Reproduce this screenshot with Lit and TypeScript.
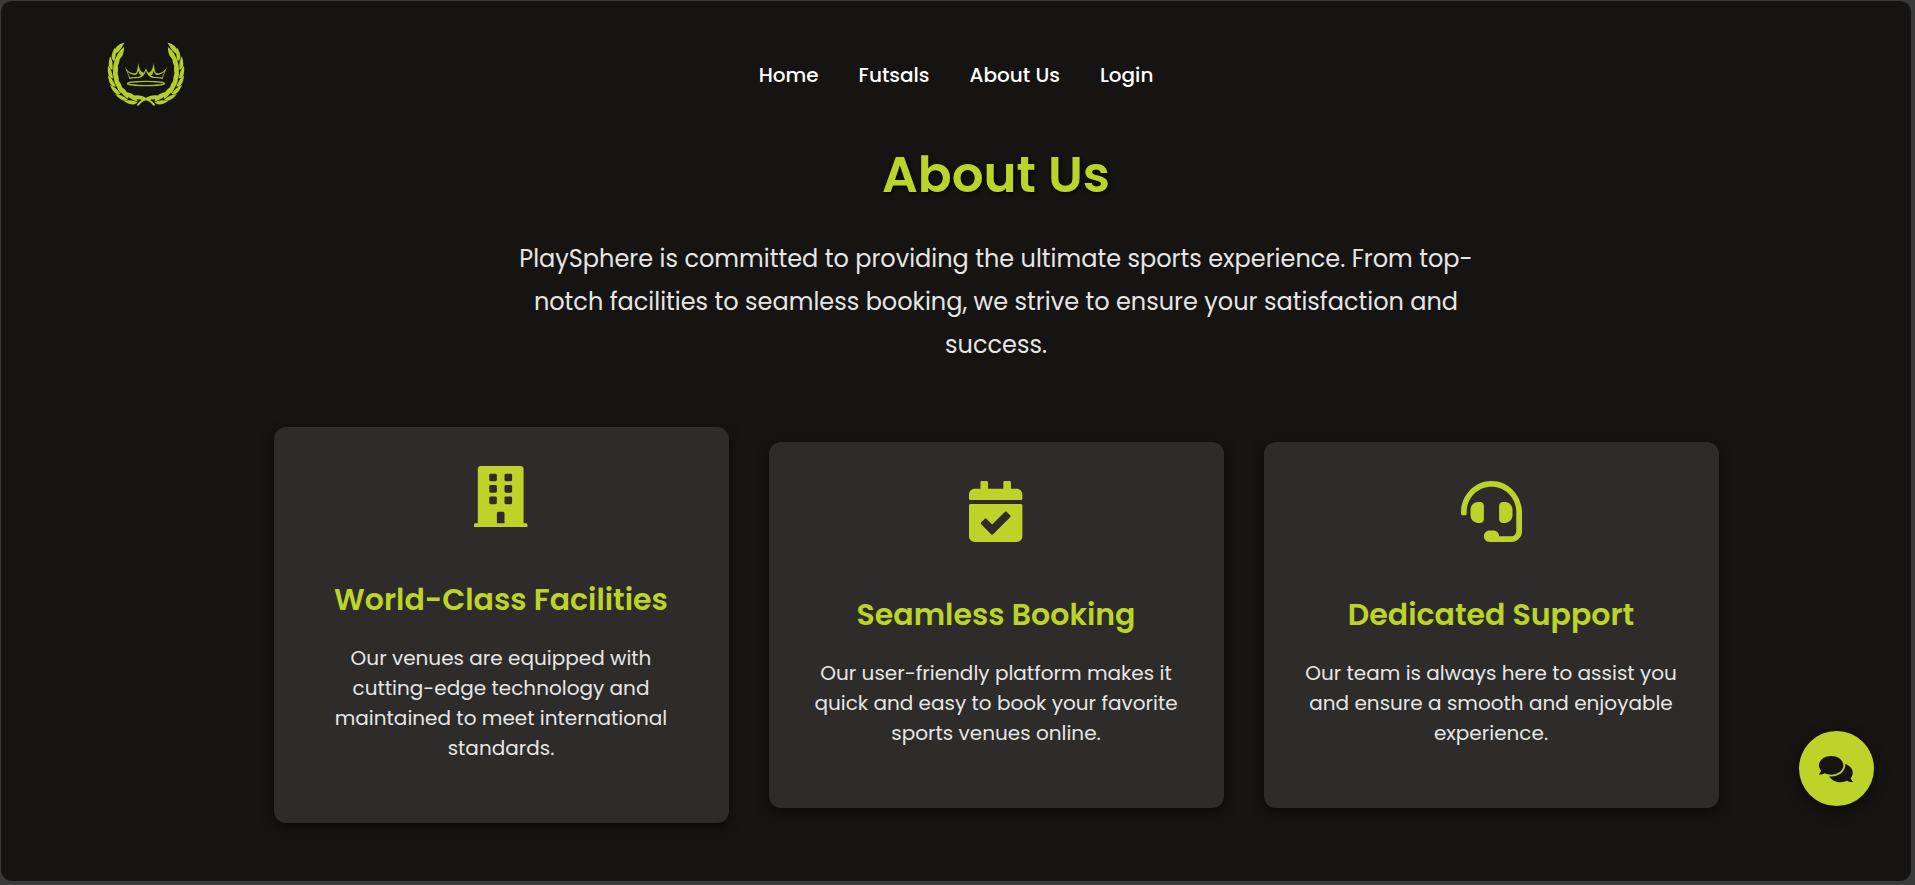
import { LitElement, html, css, svg } from "lit";
import { customElement, property } from "lit/decorators.js";

interface Feature {
  icon: keyof typeof ICONS;
  title: string;
  body: string;
}

const ICONS = {
  building: {
    box: "0 0 448 512",
    d: "M436 480h-20V24c0-13.255-10.745-24-24-24H56C42.745 0 32 10.745 32 24v456H12c-6.627 0-12 5.373-12 12v20h448v-20c0-6.627-5.373-12-12-12zM128 76c0-6.627 5.373-12 12-12h40c6.627 0 12 5.373 12 12v40c0 6.627-5.373 12-12 12h-40c-6.627 0-12-5.373-12-12V76zm0 96c0-6.627 5.373-12 12-12h40c6.627 0 12 5.373 12 12v40c0 6.627-5.373 12-12 12h-40c-6.627 0-12-5.373-12-12v-40zm52 148h-40c-6.627 0-12-5.373-12-12v-40c0-6.627 5.373-12 12-12h40c6.627 0 12 5.373 12 12v40c0 6.627-5.373 12-12 12zm76 160h-64v-84c0-6.627 5.373-12 12-12h40c6.627 0 12 5.373 12 12v84zm64-172c0 6.627-5.373 12-12 12h-40c-6.627 0-12-5.373-12-12v-40c0-6.627 5.373-12 12-12h40c6.627 0 12 5.373 12 12v40zm0-96c0 6.627-5.373 12-12 12h-40c-6.627 0-12-5.373-12-12v-40c0-6.627 5.373-12 12-12h40c6.627 0 12 5.373 12 12v40zm0-96c0 6.627-5.373 12-12 12h-40c-6.627 0-12-5.373-12-12V76c0-6.627 5.373-12 12-12h40c6.627 0 12 5.373 12 12v40z",
  },
  calendar: {
    box: "0 0 448 512",
    d: "M436 160H12c-6.627 0-12-5.373-12-12v-36c0-26.51 21.49-48 48-48h48V12c0-6.627 5.373-12 12-12h40c6.627 0 12 5.373 12 12v52h128V12c0-6.627 5.373-12 12-12h40c6.627 0 12 5.373 12 12v52h48c26.51 0 48 21.49 48 48v36c0 6.627-5.373 12-12 12zM12 192h424c6.627 0 12 5.373 12 12v260c0 26.51-21.49 48-48 48H48c-26.51 0-48-21.49-48-48V204c0-6.627 5.373-12 12-12zm333.296 95.947l-28.169-28.398c-4.667-4.705-12.265-4.736-16.97-.068L194.12 364.665l-45.98-46.352c-4.667-4.705-12.266-4.736-16.971-.068l-28.397 28.17c-4.705 4.667-4.736 12.265-.068 16.97l82.601 83.269c4.667 4.705 12.265 4.736 16.97.068l142.953-141.805c4.705-4.667 4.736-12.265.068-16.97z",
  },
  headset: {
    box: "0 0 512 512",
    d: "M192 208c0-17.67-14.33-32-32-32h-16c-35.35 0-64 28.65-64 64v48c0 35.35 28.65 64 64 64h16c17.67 0 32-14.33 32-32V208zm176 144c35.35 0 64-28.65 64-64v-48c0-35.35-28.65-64-64-64h-16c-17.67 0-32 14.33-32 32v112c0 17.67 14.33 32 32 32h16zM256 0C113.18 0 4.58 118.83 0 256v16c0 8.84 7.16 16 16 16h16c8.84 0 16-7.16 16-16v-16c0-114.69 93.31-208 208-208s208 93.31 208 208h-.12c.08 2.43.12 165.72.12 165.72 0 23.35-18.93 42.28-42.28 42.28H320c0-26.51-21.49-48-48-48h-32c-26.51 0-48 21.49-48 48s21.49 48 48 48h181.72c49.86 0 90.28-40.42 90.28-90.28V256C507.42 118.83 398.82 0 256 0z",
  },
  comments: {
    box: "0 0 576 512",
    d: "M416 192c0-88.4-93.1-160-208-160S0 103.6 0 192c0 34.3 14.1 65.9 38 92-13.4 30.2-35.5 54.2-35.8 54.5-2.2 2.3-2.8 5.7-1.5 8.7S4.8 352 8 352c36.6 0 66.9-12.3 88.7-25 32.2 15.7 70.3 25 111.3 25 114.9 0 208-71.6 208-160zm122 220c23.9-26 38-57.7 38-92 0-66.9-53.5-124.2-129.3-148.1.9 6.6 1.3 13.3 1.3 20.1 0 105.9-107.7 192-240 192-10.8 0-21.3-.8-31.7-1.9C207.8 439.6 281.8 480 368 480c41 0 79.1-9.2 111.3-25 21.8 12.7 52.1 25 88.7 25 3.2 0 6.1-1.9 7.3-4.8 1.3-2.9.7-6.3-1.5-8.7-.3-.3-22.4-24.2-35.8-54.5z",
  },
};

const NAV = ["Home", "Futsals", "About Us", "Login"];

const FEATURES: Feature[] = [
  {
    icon: "building",
    title: "World-Class Facilities",
    body: "Our venues are equipped with cutting-edge technology and maintained to meet international standards.",
  },
  {
    icon: "calendar",
    title: "Seamless Booking",
    body: "Our user-friendly platform makes it quick and easy to book your favorite sports venues online.",
  },
  {
    icon: "headset",
    title: "Dedicated Support",
    body: "Our team is always here to assist you and ensure a smooth and enjoyable experience.",
  },
];

const icon = (name: keyof typeof ICONS) =>
  html`<svg class="icon" viewBox=${ICONS[name].box} fill="currentColor" aria-hidden="true">
    <path d=${ICONS[name].d}></path>
  </svg>`;

/** Leaf pairs along one laurel branch: x, y of the joint, then the growth direction in degrees. */
const JOINTS: [number, number, number][] = [
  [8.6, 19.5, -68],
  [6.8, 28, -80],
  [7.4, 36.5, -92],
  [10, 44.5, -105],
  [14.8, 51.8, -120],
  [22, 57.3, -137],
  [31.5, 59.8, -156],
];

@customElement("brand-logo")
export class BrandLogo extends LitElement {
  static styles = css`
    :host { display: block; width: 80px; height: 66px; }
    svg { display: block; width: 80px; height: 66px; }
    .leaf { fill: #b6cd2b; }
    .stem { fill: none; stroke: #b6cd2b; stroke-width: 2; stroke-linecap: round; }
    .crown { fill: #a9bf2b; fill-rule: evenodd; }
    .ring { fill: none; stroke: #a9bf2b; stroke-width: 1.4; }
  `;

  private branch() {
    return svg`
      <path class="leaf" d="M8.4 12.6C7.6 6 12.4 2 18.6 0.6C16 4.5 14.8 9.2 8.4 12.6Z"></path>
      ${JOINTS.map(([x, y, a]) => svg`
        <path class="leaf" transform="translate(${x} ${y}) rotate(${a})"
          d="M0 -0.3C0.3 -4.4 5 -6.2 13 -4.9C10 -2.2 5.5 -0.6 0 -0.3Z"></path>
        <path class="leaf" transform="translate(${x} ${y}) rotate(${a})"
          d="M0 0.4C4.5 -0.7 10.5 -0.5 17 3.4C10.5 6.2 3.5 5.4 0 0.4Z"></path>`)}
      <path class="leaf" d="M41 56.500C36 53 30 52.6 25.500 54.200C29.500 57.600 35.500 58.600 41 56.500Z"></path>
      <path class="stem" d="M48 62.800C45 58.800 41 56.500 36 57"></path>
    `;
  }

  private crownHalf() {
    return svg`<path class="crown" d="M18.500 24.500C21.500 29 25 32 29.800 31.200C31.300 29.500 31.600 26 32.200 21C33.200 26 34.800 31.500 38.200 30.300L40 26.300L40 28.800C39 32.500 36.500 35.600 32.500 36C29.500 36.300 26 36 23.600 37.200C22.200 33 20.600 29 18.500 24.500ZM21.200 29.300C22.400 31.600 23.200 33.600 24 35.600C27.500 34.600 32 35.800 35 33.800C33.600 32.800 32.800 30.800 32.300 28.500C31.800 30.600 31.300 32 30.200 32.700C26.500 33.600 23.600 31.900 21.200 29.300Z"></path>`;
  }

  render() {
    return html`<svg viewBox="0 0 80 66" role="img">
      ${this.branch()}
      <g transform="translate(80 0) scale(-1 1)">${this.branch()}</g>
      ${this.crownHalf()}
      <g transform="translate(80 0) scale(-1 1)">${this.crownHalf()}</g>
      <ellipse class="ring" cx="40" cy="41.5" rx="18.5" ry="2.1"></ellipse>
    </svg>`;
  }
}

@customElement("feature-card")
export class FeatureCard extends LitElement {
  @property({ attribute: false }) feature!: Feature;

  static styles = css`
    :host {
      display: flex;
      flex-direction: column;
      align-items: center;
      box-sizing: border-box;
      padding: 39px 39px 60px;
      border-radius: 12px;
      background: #2d2c2a;
      box-shadow: 0 4px 12px rgba(0, 0, 0, 0.5);
      text-align: center;
    }
    .icon { display: block; height: 61px; color: #bcd42a; }
    .title {
      margin: 54.5px 0 25.5px;
      color: #bcd42a;
      font-size: 30px;
      font-weight: 600;
      line-height: 36px;
    }
    .body { margin: 0; color: #e6e6e6; font-size: 20px; line-height: 30px; }
  `;

  render() {
    const { icon: name, title, body } = this.feature;
    return html`
      ${icon(name)}
      <h3 class="title">${title}</h3>
      <p class="body">${body}</p>
    `;
  }
}

@customElement("app-root")
export class AppRoot extends LitElement {
  static styles = css`
    :host {
      display: block;
      box-sizing: border-box;
      height: 885px;
      padding: 1px 4px 4px 1px;
      background: #3b3a3a;
      font-family: Poppins, Inter, sans-serif;
    }
    .shell {
      position: relative;
      box-sizing: border-box;
      height: 880px;
      overflow: hidden;
      border-radius: 11px;
      background: #161412;
    }
    .header {
      display: grid;
      grid-template-columns: 1fr auto 1fr;
      align-items: center;
      height: 148px;
      padding: 0 105px;
    }
    .nav { display: flex; gap: 40px; }
    .link {
      color: #fff;
      font-size: 20px;
      font-weight: 500;
      line-height: 30px;
      text-decoration: none;
    }
    .main {
      display: flex;
      flex-direction: column;
      align-items: center;
      padding-left: 80px;
      text-align: center;
    }
    .heading {
      margin: 0 0 37px;
      color: #bcd42a;
      font-size: 50px;
      font-weight: 600;
      line-height: 51px;
      text-shadow: 2px 2px 4px rgba(0, 0, 0, 0.7);
    }
    .intro {
      max-width: 975px;
      margin: 0;
      color: #e6e6e6;
      font-size: 24px;
      line-height: 43.2px;
    }
    .cards {
      display: grid;
      grid-template-columns: repeat(3, 455px);
      gap: 40px;
      align-items: center;
      margin-top: 60.4px;
    }
    .chat {
      position: absolute;
      right: 37px;
      bottom: 75px;
      display: grid;
      place-items: center;
      width: 75px;
      height: 75px;
      padding: 0;
      border: 0;
      border-radius: 50%;
      background: #bcd42a;
      color: #161412;
      box-shadow: 0 5px 15px rgba(0, 0, 0, 0.4);
    }
    .chat .icon { display: block; height: 30px; margin-right: 1px; }
  `;

  render() {
    return html`
      <div class="shell">
        <header class="header">
          <brand-logo></brand-logo>
          <nav class="nav">${NAV.map((label) => html`<a class="link">${label}</a>`)}</nav>
        </header>
        <main class="main">
          <h1 class="heading">About Us</h1>
          <p class="intro">
            PlaySphere is committed to providing the ultimate sports experience. From top-notch
            facilities to seamless booking, we strive to ensure your satisfaction and success.
          </p>
          <section class="cards">
            ${FEATURES.map((f) => html`<feature-card .feature=${f}></feature-card>`)}
          </section>
        </main>
        <button class="chat">${icon("comments")}</button>
      </div>
    `;
  }
}
